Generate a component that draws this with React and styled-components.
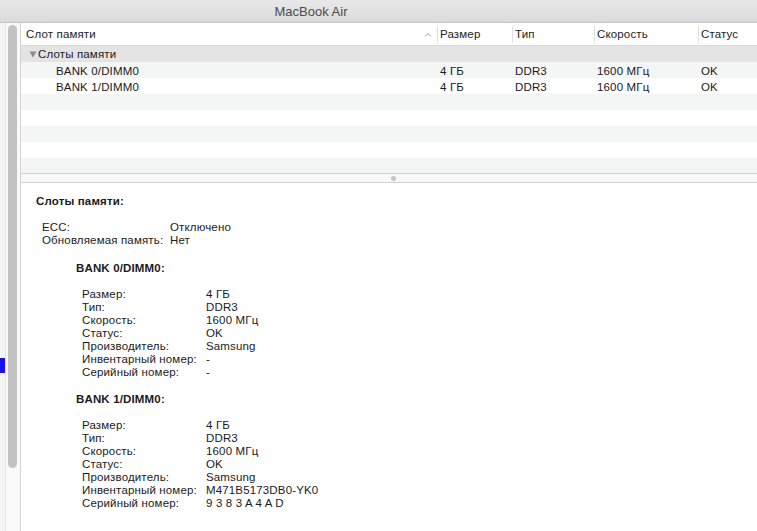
import React from 'react'
import styled, { createGlobalStyle } from 'styled-components'

const COLS = '416px 75px 82px 104px 1fr'

const slots = [
  {
    name: 'BANK 0/DIMM0',
    size: '4 ГБ',
    type: 'DDR3',
    speed: '1600 МГц',
    status: 'OK',
    maker: 'Samsung',
    part: '-',
    serial: '-',
  },
  {
    name: 'BANK 1/DIMM0',
    size: '4 ГБ',
    type: 'DDR3',
    speed: '1600 МГц',
    status: 'OK',
    maker: 'Samsung',
    part: 'M471B5173DB0-YK0',
    serial: '9 3 8 3 A 4 A D',
  },
]

const GlobalStyle = createGlobalStyle`
  html, body {
    margin: 0;
    padding: 0;
    background: #fff;
  }
  body {
    font-family: "Liberation Sans", Arial, sans-serif;
    font-size: 11.5px;
    color: #1b1b1b;
    overflow: hidden;
  }
`

const Window = styled.div`
  width: 757px;
  height: 531px;
  display: flex;
  flex-direction: column;
  overflow: hidden;
`

const TitleBar = styled.div`
  height: 22px;
  flex: none;
  display: flex;
  align-items: center;
  justify-content: center;
  padding-right: 135px;
  background: linear-gradient(#e8e8e8, #dadada);
  border-bottom: 1px solid #c4c4c4;
  font-size: 13px;
  color: #4d4d4d;
`

const Body = styled.div`
  flex: 1;
  min-height: 0;
  display: flex;
`

const Sidebar = styled.div`
  width: 21px;
  flex: none;
  display: flex;
`

const Strip = styled.div`
  width: 5px;
  padding-top: 335px;
  background: #f4f4f4;
`

const Marker = styled.div`
  width: 5px;
  height: 15px;
  background: #1c10e6;
`

const Track = styled.div`
  width: 16px;
  box-sizing: border-box;
  padding: 2px 3px 0 2px;
  background: #f9f9f9;
  border-left: 1px solid #e4e4e4;
  border-right: 1px solid #d3d3d3;
`

const Thumb = styled.div`
  width: 9px;
  height: 443px;
  border-radius: 5px;
  background: #c2c2c2;
`

const Main = styled.div`
  flex: 1;
  min-width: 0;
  display: flex;
  flex-direction: column;
  letter-spacing: 0.15px;
`

const Header = styled.div`
  height: 22px;
  flex: none;
  display: grid;
  grid-template-columns: ${COLS};
  align-items: center;
  border-bottom: 1px solid #d8d8d8;
  color: #222;
`

const HeadCell = styled.div`
  display: flex;
  align-items: center;
  justify-content: space-between;
  height: 17px;
  padding-left: ${(p) => (p.$first ? 5 : 2)}px;
  padding-right: ${(p) => (p.$first ? 5 : 0)}px;
  border-left: ${(p) => (p.$first ? 'none' : '1px solid #e0e0e0')};
  white-space: nowrap;
`

const RowArea = styled.div`
  height: 127px;
  flex: none;
  overflow: hidden;
  border-bottom: 1px solid #d2d2d2;
`

const GroupRow = styled.div`
  height: 16px;
  display: flex;
  align-items: center;
  gap: 1px;
  padding-left: 8px;
  background: #e4e4e4;
  color: #222;
`

const Row = styled.div`
  height: 16px;
  box-sizing: border-box;
  padding-top: 1px;
  display: grid;
  grid-template-columns: ${COLS};
  align-items: center;
  background: ${(p) => (p.$striped ? '#f4f5f5' : '#fff')};
`

const Cell = styled.div`
  padding-left: ${(p) => (p.$indent ? 35 : 3)}px;
  white-space: nowrap;
`

const Splitter = styled.div`
  height: 8px;
  flex: none;
  display: flex;
  align-items: center;
  justify-content: center;
  padding-left: 8px;
  background: #f8f8f8;
  border-bottom: 1px solid #d2d2d2;
`

const Dot = styled.div`
  width: 5px;
  height: 5px;
  border-radius: 50%;
  background: #c4c4c4;
`

const Detail = styled.div`
  flex: 1;
  padding: 12px 15px 0;
  line-height: 13px;
`

const Title = styled.div`
  font-weight: bold;
  margin-top: ${(p) => p.$top || 0}px;
  margin-left: ${(p) => p.$indent || 0}px;
`

const Props = styled.div`
  display: grid;
  grid-template-columns: ${(p) => p.$label}px auto;
  margin-top: 13px;
  margin-left: ${(p) => p.$indent}px;
  white-space: nowrap;
`

const Caret = () => (
  <svg width="8" height="5" viewBox="0 0 8 5">
    <path d="M1 4.5 L4 1.5 L7 4.5" fill="none" stroke="#9a9a9a" strokeWidth="1" />
  </svg>
)

const Disclosure = () => (
  <svg width="8" height="7" viewBox="0 0 8 7">
    <path d="M0.5 0.5 H7.5 L4 6.5 Z" fill="#8c8c8c" />
  </svg>
)

const SlotDetail = ({ slot, top }) => (
  <>
    <Title $top={top} $indent={40}>
      {slot.name}:
    </Title>
    <Props $label={124} $indent={46}>
      <span>Размер:</span>
      <span>{slot.size}</span>
      <span>Тип:</span>
      <span>{slot.type}</span>
      <span>Скорость:</span>
      <span>{slot.speed}</span>
      <span>Статус:</span>
      <span>{slot.status}</span>
      <span>Производитель:</span>
      <span>{slot.maker}</span>
      <span>Инвентарный номер:</span>
      <span>{slot.part}</span>
      <span>Серийный номер:</span>
      <span>{slot.serial}</span>
    </Props>
  </>
)

const App = () => (
  <Window>
    <GlobalStyle />
    <TitleBar>MacBook Air</TitleBar>
    <Body>
      <Sidebar>
        <Strip>
          <Marker />
        </Strip>
        <Track>
          <Thumb />
        </Track>
      </Sidebar>
      <Main>
        <Header>
          <HeadCell $first>
            <span>Слот памяти</span>
            <Caret />
          </HeadCell>
          <HeadCell>Размер</HeadCell>
          <HeadCell>Тип</HeadCell>
          <HeadCell>Скорость</HeadCell>
          <HeadCell>Статус</HeadCell>
        </Header>
        <RowArea>
          <GroupRow>
            <Disclosure />
            <span>Слоты памяти</span>
          </GroupRow>
          {slots.map((s, i) => (
            <Row key={s.name} $striped={i % 2 === 0}>
              <Cell $indent>{s.name}</Cell>
              <Cell>{s.size}</Cell>
              <Cell>{s.type}</Cell>
              <Cell>{s.speed}</Cell>
              <Cell>{s.status}</Cell>
            </Row>
          ))}
          {[0, 1, 2, 3, 4].map((n) => (
            <Row key={n} $striped={n % 2 === 0} />
          ))}
        </RowArea>
        <Splitter>
          <Dot />
        </Splitter>
        <Detail>
          <Title>Слоты памяти:</Title>
          <Props $label={128} $indent={6}>
            <span>ECC:</span>
            <span>Отключено</span>
            <span>Обновляемая память:</span>
            <span>Нет</span>
          </Props>
          {slots.map((s, i) => (
            <SlotDetail key={s.name} slot={s} top={i === 0 ? 15 : 14} />
          ))}
        </Detail>
      </Main>
    </Body>
  </Window>
)

export default App
